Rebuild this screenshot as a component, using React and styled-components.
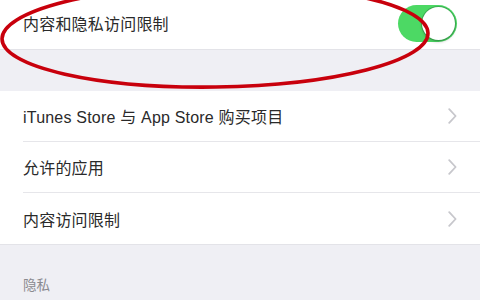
import styled, { createGlobalStyle } from "styled-components";

const GlobalStyle = createGlobalStyle`
  html, body {
    margin: 0;
    padding: 0;
    background: #efeff4;
  }
  body {
    font-family: "Liberation Sans", "Noto Sans CJK SC", sans-serif;
    -webkit-font-smoothing: antialiased;
  }
`;

const Page = styled.div`
  position: relative;
  width: 480px;
  height: 300px;
  overflow: hidden;
  background: #efeff4;
`;

const Section = styled.div`
  background: #fff;
  margin-top: ${(p) => p.$gap || 0}px;
  border-bottom: 1px solid #e3e3e8;
`;

const Row = styled.div`
  display: flex;
  align-items: center;
  justify-content: space-between;
  height: ${(p) => p.$height || 51}px;
  margin-left: 23px;
  padding-right: 23px;
  box-sizing: border-box;

  &:not(:last-child) {
    border-bottom: 1px solid #e6e6ea;
  }
`;

const Label = styled.span`
  font-size: 16px;
  color: #2a2a2a;
  letter-spacing: 0.2px;
`;

const Chevron = styled.svg`
  width: 9px;
  height: 16px;
`;

const Track = styled.div`
  display: flex;
  align-items: center;
  justify-content: flex-end;
  width: 59px;
  height: 37px;
  padding: 2px;
  box-sizing: border-box;
  border-radius: 19px;
  background: #4cd964;
`;

const Knob = styled.div`
  width: 33px;
  height: 33px;
  border-radius: 50%;
  background: #fff;
  box-shadow: 0 0 0 1px rgba(40, 120, 60, 0.45), 0 2px 3px rgba(0, 0, 0, 0.2);
`;

const Header = styled.div`
  padding: 29px 23px 0;
  font-size: 13.5px;
  color: #8a8a8f;
`;

const Circle = styled.svg`
  position: absolute;
  left: 0;
  top: 0;
  width: 480px;
  height: 300px;
  pointer-events: none;
`;

function Arrow() {
  return (
    <Chevron viewBox="0 0 9 16">
      <path
        d="M1.2 1.2 L7.6 8 L1.2 14.8"
        fill="none"
        stroke="#c7c7cc"
        strokeWidth="1.8"
        strokeLinecap="round"
        strokeLinejoin="round"
      />
    </Chevron>
  );
}

const links = ["iTunes Store 与 App Store 购买项目", "允许的应用", "内容访问限制"];

export default function App() {
  return (
    <Page>
      <GlobalStyle />
      <Section $gap={-3}>
        <Row $height={52}>
          <Label>内容和隐私访问限制</Label>
          <Track>
            <Knob />
          </Track>
        </Row>
      </Section>
      <Section $gap={41}>
        {links.map((text) => (
          <Row key={text}>
            <Label>{text}</Label>
            <Arrow />
          </Row>
        ))}
      </Section>
      <Header>隐私</Header>
      <Circle viewBox="0 0 480 300">
        <ellipse
          cx="215"
          cy="36"
          rx="213"
          ry="51"
          transform="rotate(-0.8 215 36)"
          fill="none"
          stroke="#c8000c"
          strokeWidth="3.6"
        />
      </Circle>
    </Page>
  );
}
